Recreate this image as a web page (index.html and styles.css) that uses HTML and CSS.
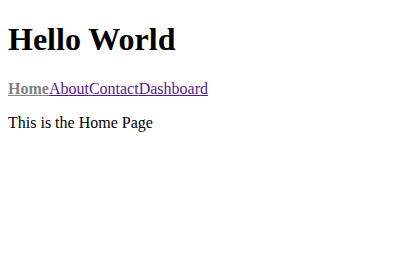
FILE: index.html
```html
<!DOCTYPE html>
<html>
<head>
<meta charset="utf-8">
<title>Hello World</title>
<link rel="stylesheet" href="styles.css">
</head>
<body class="page">
<h1 class="title">Hello World</h1>
<nav class="nav"><a class="nav-link active" href="#home">Home</a><a class="nav-link" href="#about">About</a><a class="nav-link" href="#contact">Contact</a><a class="nav-link" href="#dashboard">Dashboard</a></nav>
<p class="content">This is the Home Page</p>
</body>
</html>
```

FILE: styles.css
```css
html { background: #fff; }
.page {
  margin: 0 8px 8px;
  font-family: "Liberation Serif", "Times New Roman", serif;
  font-size: 16px;
  color: #000;
}
.title {
  font-size: 2em;
  font-weight: bold;
  margin: 0.67em 0;
}
.nav {
  display: block;
  margin: 16px 0;
}
.nav-link {
  color: #551a8b;
  text-decoration: underline;
}
.nav-link.active {
  color: #808080;
  font-weight: bold;
}
.content {
  margin: 16px 0;
}
```
